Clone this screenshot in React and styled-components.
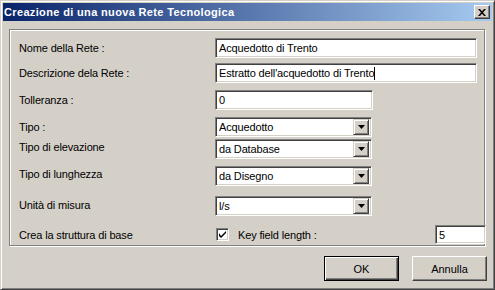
import React from 'react';
import styled, { createGlobalStyle } from 'styled-components';

const GlobalStyle = createGlobalStyle`
  html, body {
    margin: 0;
    padding: 0;
    background: #d4d0c8;
  }
  body {
    font-family: "Liberation Sans", Arial, sans-serif;
    font-size: 11px;
    color: #000;
  }
`;

const Window = styled.div`
  box-sizing: border-box;
  width: 495px;
  height: 290px;
  padding: 2px;
  background: #d4d0c8;
  border: 1px solid;
  border-color: #d4d0c8 #404040 #404040 #d4d0c8;
  box-shadow: inset 1px 1px 0 #fff, inset -1px -1px 0 #808080;
  display: flex;
  flex-direction: column;
`;

const TitleBar = styled.div`
  height: 18px;
  display: flex;
  align-items: center;
  justify-content: space-between;
  padding: 0 2px 0 1px;
  background: linear-gradient(to right, #0a246a 0%, #a6caf0 100%);
`;

const TitleText = styled.span`
  color: #fff;
  font-weight: bold;
  font-size: 11px;
  letter-spacing: 0.35px;
  white-space: nowrap;
`;

// raised 3D bevel shared by buttons
const raised = `
  border: 1px solid;
  border-color: #fff #404040 #404040 #fff;
  box-shadow: inset -1px -1px 0 #808080;
  background: #d4d0c8;
`;

const CloseButton = styled.div`
  box-sizing: border-box;
  width: 16px;
  height: 14px;
  display: flex;
  align-items: center;
  justify-content: center;
  ${raised}
`;

const Body = styled.div`
  flex: 1;
  display: flex;
  flex-direction: column;
  padding: 8px 5px 0 6px;
`;

const GroupBox = styled.div`
  box-sizing: border-box;
  width: 476px;
  height: 217px;
  border: 1px solid #808080;
  box-shadow: inset 1px 1px 0 #fff, 1px 1px 0 #fff;
  padding: 0 0 0 9px;
  display: flex;
  flex-direction: column;
`;

const Row = styled.div`
  display: grid;
  grid-template-columns: 196px 1fr;
  align-items: center;
  margin-top: ${p => p.$mt}px;
`;

const Label = styled.span`
  white-space: nowrap;
  letter-spacing: -0.15px;
  position: relative;
  top: ${p => p.$shift || 0}px;
`;

const sunken = `
  box-sizing: border-box;
  border: 1px solid;
  border-color: #808080 #fff #fff #808080;
  box-shadow: inset 1px 1px 0 #404040, inset -1px -1px 0 #d4d0c8;
  background: #fff;
`;

const Field = styled.div`
  ${sunken}
  width: ${p => p.$w}px;
  height: ${p => p.$h || 20}px;
  margin-right: ${p => p.$mr || 0}px;
  display: flex;
  align-items: center;
  padding-left: 3px;
  letter-spacing: -0.15px;
  white-space: nowrap;
`;

const Caret = styled.span`
  display: inline-block;
  width: 1px;
  height: 13px;
  background: #000;
`;

const Combo = styled.div`
  ${sunken}
  width: 157px;
  height: 20px;
  display: flex;
  align-items: center;
  justify-content: space-between;
  padding: 2px 2px 2px 3px;
  letter-spacing: -0.15px;
`;

const ArrowButton = styled.div`
  box-sizing: border-box;
  width: 16px;
  height: 16px;
  display: flex;
  align-items: center;
  justify-content: center;
  border: 1px solid;
  border-color: #d4d0c8 #404040 #404040 #d4d0c8;
  box-shadow: inset 1px 1px 0 #fff, inset -1px -1px 0 #808080;
  background: #d4d0c8;
`;

const CheckRow = styled.div`
  display: flex;
  align-items: center;
  padding-left: 1px;
`;

const CheckBox = styled.div`
  ${sunken}
  width: 13px;
  height: 13px;
  display: flex;
  align-items: center;
  justify-content: center;
`;

const CheckLabel = styled.span`
  margin-left: 9px;
  flex: 1;
  letter-spacing: -0.15px;
`;

const ButtonRow = styled.div`
  display: flex;
  justify-content: flex-end;
  gap: 13px;
  margin-top: 10px;
`;

const Button = styled.div`
  box-sizing: border-box;
  width: 75px;
  height: 25px;
  display: flex;
  align-items: center;
  justify-content: center;
  ${raised}
  ${p => p.$default && `
    border: 1px solid #000;
    box-shadow: inset 1px 1px 0 #fff, inset -1px -1px 0 #404040, inset -2px -2px 0 #808080;
  `}
`;

const Arrow = () => (
  <svg width="7" height="4" viewBox="0 0 7 4">
    <path d="M0 0h7L3.5 4z" fill="#000" />
  </svg>
);

const rows = [
  { label: 'Nome della Rete :', mt: 8, kind: 'field', w: 262, value: 'Acquedotto di Trento' },
  { label: 'Descrizione dela Rete :', mt: 5, kind: 'field', w: 262, value: "Estratto dell'acquedotto di Trento", caret: true },
  { label: 'Tolleranza :', mt: 7, kind: 'field', w: 158, value: '0' },
  { label: 'Tipo :', mt: 7, kind: 'combo', value: 'Acquedotto' },
  { label: 'Tipo di elevazione', mt: 2, kind: 'combo', value: 'da Database', shift: -2 },
  { label: 'Tipo di lunghezza', mt: 7, kind: 'combo', value: 'da Disegno', shift: -2 },
  { label: 'Unità di misura', mt: 10, kind: 'combo', value: 'l/s', shift: -1 },
];

export default function App() {
  return (
    <>
      <GlobalStyle />
      <Window>
        <TitleBar>
          <TitleText>Creazione di una nuova Rete Tecnologica</TitleText>
          <CloseButton>
            <svg width="8" height="7" viewBox="0 0 8 7">
              <path d="M0 0h2l2 2.2L6 0h2L5 3.5 8 7H6L4 4.8 2 7H0l3-3.5z" fill="#000" />
            </svg>
          </CloseButton>
        </TitleBar>
        <Body>
          <GroupBox>
            {rows.map(r => (
              <Row key={r.label} $mt={r.mt}>
                <Label $shift={r.shift}>{r.label}</Label>
                {r.kind === 'field' ? (
                  <Field $w={r.w}>
                    {r.value}
                    {r.caret && <Caret />}
                  </Field>
                ) : (
                  <Combo>
                    <span>{r.value}</span>
                    <ArrowButton><Arrow /></ArrowButton>
                  </Combo>
                )}
              </Row>
            ))}
            <Row $mt={9}>
              <Label>Crea la struttura di base</Label>
              <CheckRow>
                <CheckBox>
                  <svg width="7" height="7" viewBox="0 0 7 7">
                    <path d="M0 2v3l2 2 5-5V0L2 5z" fill="#000" />
                  </svg>
                </CheckBox>
                <CheckLabel>Key field length :</CheckLabel>
                <Field $w={51} $h={19} $mr={-2}>5</Field>
              </CheckRow>
            </Row>
          </GroupBox>
          <ButtonRow>
            <Button $default>OK</Button>
            <Button>Annulla</Button>
          </ButtonRow>
        </Body>
      </Window>
    </>
  );
}
